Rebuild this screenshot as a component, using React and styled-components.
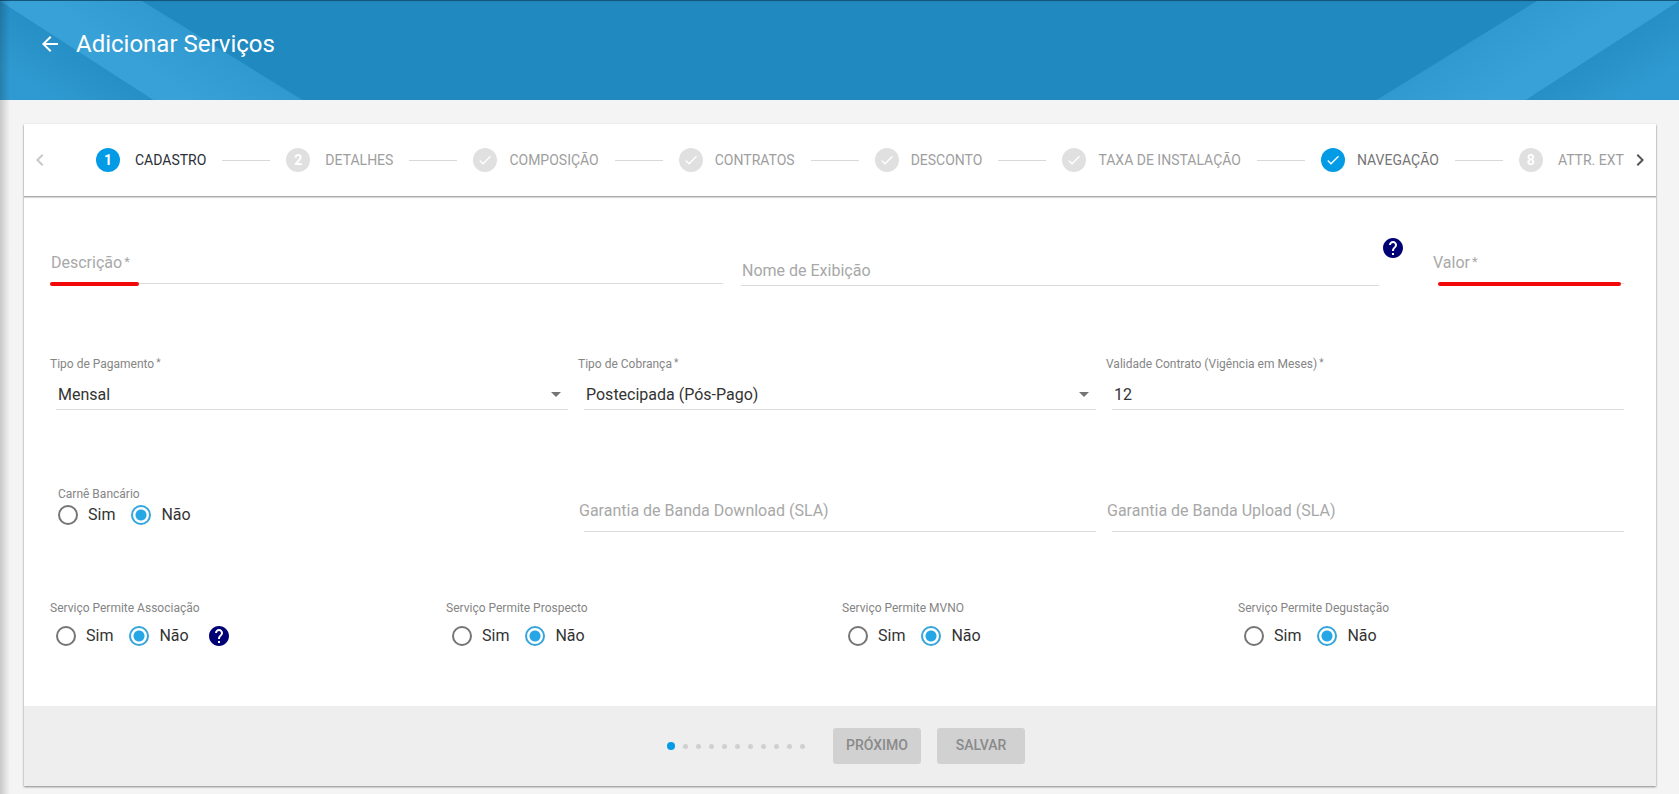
import React, { useState } from 'react';
import styled, { createGlobalStyle } from 'styled-components';
import { MdArrowBack, MdCheck, MdChevronLeft, MdChevronRight, MdHelp } from 'react-icons/md';

const GlobalStyle = createGlobalStyle`
  * {
    box-sizing: border-box;
  }

  body {
    margin: 0;
    background-color: #f4f4f4;
    color: #333;
    font-family: Roboto, "Liberation Sans", sans-serif;
    font-size: 16px;
  }

  button, input, select {
    font: inherit;
    color: inherit;
  }
`;

const Page = styled.div`
  position: relative;
  min-height: 100vh;
  padding-bottom: 7px;

  /* shadow of the closed side menu */
  &::after {
    content: '';
    position: absolute;
    top: 0;
    bottom: 0;
    left: 0;
    width: 10px;
    background: linear-gradient(to right, rgba(0, 0, 0, 0.18), rgba(0, 0, 0, 0));
    pointer-events: none;
  }
`;

const Header = styled.header`
  position: relative;
  height: 100px;
  padding: 28px 38px;
  display: flex;
  align-items: flex-start;
  gap: 14px;
  background-color: #2089bf;
  box-shadow: inset 0 2px 1px -1px rgba(0, 0, 0, 0.4);
  overflow: hidden;
`;

const Stripes = styled.svg`
  position: absolute;
  top: 1px;
  left: ${props => props.$right ? 'auto' : '0'};
  right: ${props => props.$right ? '0' : 'auto'};
  width: 306px;
  height: 100px;
  transform: ${props => props.$right ? 'scaleX(-1)' : 'none'};
`;

const IconButton = styled.button`
  position: relative;
  display: flex;
  padding: 4px 0;
  border: 0;
  background: none;
  color: ${props => props.$color};
  cursor: pointer;
`;

const Title = styled.h1`
  position: relative;
  margin: 0;
  color: white;
  font-size: 24px;
  font-weight: 400;
  line-height: 32px;
`;

const Card = styled.form`
  margin: 24px 23px 0 24px;
  background-color: white;
  box-shadow: 0 1px 2px rgba(0, 0, 0, 0.45);
`;

const StepBar = styled.nav`
  height: 73px;
  padding: 0 4px;
  display: flex;
  align-items: center;
  border-bottom: 1px solid #a9abab;
  box-shadow: 0 1px 1px rgba(0, 0, 0, 0.15);
`;

const StepList = styled.ol`
  flex: 1;
  min-width: 0;
  height: 100%;
  margin: 0 4px 0 0;
  padding: 0 0 0 44px;
  display: flex;
  align-items: center;
  list-style: none;
  overflow: hidden;
`;

const StepItem = styled.li`
  flex: none;
  display: flex;
  align-items: center;

  & + &::before {
    content: '';
    width: 48px;
    height: 1px;
    margin: 1px 16px 0;
    background-color: #d8d8d8;
  }
`;

const StepButton = styled.button`
  padding: 0;
  border: 0;
  background: none;
  display: flex;
  align-items: center;
  gap: ${props => props.$numbered ? '15px' : '12px'};
  color: ${props => props.$color};
  font-size: 14px;
  font-weight: 400;
  line-height: 20px;
  white-space: nowrap;
  cursor: pointer;
`;

const StepMark = styled.span`
  width: 24px;
  height: 24px;
  border-radius: 50%;
  display: flex;
  align-items: center;
  justify-content: center;
  background-color: ${props => props.$on ? '#039be5' : '#e0e0e0'};
  color: white;
  font-weight: 700;
`;

const Body = styled.div`
  padding: 0 32px 0 26px;
`;

const Row = styled.div`
  display: grid;
  grid-template-columns: ${props => props.$columns};
  column-gap: ${props => props.$gap || '10px'};
  align-items: start;
  height: ${props => props.$height};
`;

/* label and input share one cell, the label floats over the empty input */
const EmptyField = styled.div`
  position: relative;
  display: grid;
  margin-top: ${props => props.$top};

  & > * {
    grid-area: 1 / 1;
  }

  &::after {
    content: '';
    display: ${props => props.$marked ? 'block' : 'none'};
    position: absolute;
    bottom: -2px;
    left: ${props => props.$markFrom};
    width: ${props => props.$markWidth};
    height: 4px;
    border-radius: 2px;
    background-color: #f20808;
  }
`;

const FloatingLabel = styled.label`
  padding-top: ${props => props.$low ? '6px' : '0'};
  padding-left: 1px;
  color: #a8a8a8;
  line-height: 20px;
  pointer-events: none;
`;

const SmallLabel = styled.label`
  color: #858585;
  font-size: 12px;
  line-height: 16px;
`;

const Required = styled.span`
  padding-left: 2px;
  font-size: ${props => props.$small ? '10px' : '13px'};
  line-height: ${props => props.$small ? '14px' : '18px'};
  vertical-align: top;
`;

const Input = styled.input`
  width: ${props => props.$flush ? '100%' : 'calc(100% - 6px)'};
  height: 31px;
  margin-left: ${props => props.$flush ? '0' : '6px'};
  padding: 2px 2px 1px;
  border: 0;
  border-bottom: 1px solid #dcdcdc;
  border-radius: 0;
  background: none;
  outline: none;

  &:focus {
    border-bottom-color: #039be5;
  }
`;

const Field = styled.div`
  display: flex;
  flex-direction: column;
  gap: 7px;
`;

const SelectBox = styled.div`
  display: grid;
  align-items: center;
  margin-left: 6px;
  border-bottom: 1px solid #dcdcdc;

  & > * {
    grid-area: 1 / 1;
  }

  &::after {
    content: '';
    grid-area: 1 / 1;
    justify-self: end;
    margin-right: 7px;
    border: 5px solid transparent;
    border-top-color: #757575;
    border-bottom: 0;
    pointer-events: none;
  }
`;

const Select = styled.select`
  width: 100%;
  height: 30px;
  padding: 1px 2px 0;
  border: 0;
  background: none;
  appearance: none;
  outline: none;
`;

const NameGroup = styled.div`
  display: flex;
  align-items: flex-start;
  gap: 2px;
  padding-right: 9px;

  ${EmptyField} {
    flex: 1;
  }
`;

const HelpButton = styled(IconButton)`
  padding: 0;
  margin-top: ${props => props.$raised ? '39px' : '0'};
  margin-left: ${props => props.$spaced ? '18px' : '0'};
`;

const RadioGroup = styled.fieldset`
  margin: 0;
  padding: 0 0 0 ${props => props.$inset ? '8px' : '0'};
  border: 0;
  min-width: 0;
`;

const Legend = styled.legend`
  padding: 0;
  color: #858585;
  font-size: 12px;
  line-height: 16px;
`;

const RadioRow = styled.div`
  height: 24px;
  margin-top: ${props => props.$inset ? '1px' : '8px'};
  margin-left: ${props => props.$inset ? '0' : '6px'};
  display: flex;
  align-items: center;
`;

const RadioLabel = styled.label`
  display: flex;
  align-items: center;
  gap: 10px;
  margin-right: 16px;
  color: #333;
  line-height: 24px;
  cursor: pointer;

  &:last-of-type {
    margin-right: 0;
  }
`;

const Radio = styled.input`
  appearance: none;
  width: 20px;
  height: 20px;
  margin: 0;
  border: 2px solid #757575;
  border-radius: 50%;

  &:checked {
    border-color: #35a5dc;
    background: radial-gradient(circle, #27a6e6 5px, transparent 6px);
  }
`;

const Footer = styled.footer`
  height: 80px;
  padding-left: 12px;
  display: flex;
  align-items: center;
  justify-content: center;
  gap: 16px;
  background-color: #eee;
`;

const Dots = styled.div`
  display: flex;
  align-items: center;
  gap: 8px;
  margin-right: 12px;
`;

const Dot = styled.span`
  width: ${props => props.$on ? '8px' : '5px'};
  height: ${props => props.$on ? '8px' : '5px'};
  border-radius: 50%;
  background-color: ${props => props.$on ? '#039be5' : '#d0d0d0'};
`;

const Button = styled.button`
  min-width: 88px;
  height: 36px;
  padding: 0 12px 2px;
  border: 0;
  border-radius: 3px;
  background-color: #d1d1d1;
  color: #8a8a8a;
  font-size: 14px;
  font-weight: 500;
`;

const steps = [
  { label: 'CADASTRO', mark: '1', on: true, color: '#2b2f38' },
  { label: 'DETALHES', mark: '2', color: '#9e9e9e' },
  { label: 'COMPOSIÇÃO', color: '#9e9e9e' },
  { label: 'CONTRATOS', color: '#9e9e9e' },
  { label: 'DESCONTO', color: '#9e9e9e' },
  { label: 'TAXA DE INSTALAÇÃO', color: '#9e9e9e' },
  { label: 'NAVEGAÇÃO', on: true, color: '#757575' },
  { label: 'ATTR. EXTRAS', mark: '8', color: '#9e9e9e' },
];

const HeaderStripes = ({ id, right }) => (
  <Stripes $right={right} viewBox="0 0 306 100" aria-hidden="true">
    <defs>
      <linearGradient id={`${id}-band`} gradientUnits="userSpaceOnUse" x1="225" y1="50" x2="192" y2="100">
        <stop offset="0" stopColor="#3099cf" />
        <stop offset="1" stopColor="#38a1d8" />
      </linearGradient>
      <linearGradient id={`${id}-corner`} gradientUnits="userSpaceOnUse" x1="78" y1="50" x2="48" y2="97">
        <stop offset="0" stopColor="#268fc5" />
        <stop offset="1" stopColor="#2f9ad1" />
      </linearGradient>
    </defs>
    <polygon points="0,0 142,0 304,100 0,100" fill={`url(#${id}-band)`} />
    <polygon points="0,0 155,100 0,100" fill={`url(#${id}-corner)`} />
  </Stripes>
);

const TextField = ({ id, label, required, low, flush, ...rest }) => (
  <EmptyField {...rest}>
    <Input id={id} type="text" required={required} $flush={flush} />
    <FloatingLabel htmlFor={id} $low={low}>
      {label}{required && <Required>*</Required>}
    </FloatingLabel>
  </EmptyField>
);

const SelectField = ({ id, label, options }) => (
  <Field>
    <SmallLabel htmlFor={id}>{label}<Required $small>*</Required></SmallLabel>
    <SelectBox>
      <Select id={id}>
        {options.map(option => <option key={option}>{option}</option>)}
      </Select>
    </SelectBox>
  </Field>
);

const YesNo = ({ name, label, inset, children }) => {
  const [value, setValue] = useState('Não');

  return (
    <RadioGroup $inset={inset}>
      <Legend>{label}</Legend>
      <RadioRow $inset={inset}>
        {['Sim', 'Não'].map(option => (
          <RadioLabel key={option}>
            <Radio
              type="radio"
              name={name}
              checked={value === option}
              onChange={() => setValue(option)} />
            {option}
          </RadioLabel>
        ))}
        {children}
      </RadioRow>
    </RadioGroup>
  );
};

const Help = ({ spaced, raised }) => (
  <HelpButton type="button" aria-label="Ajuda" $color="#000075" $spaced={spaced} $raised={raised}>
    <MdHelp size={24} />
  </HelpButton>
);

const App = () => (
  <Page>
    <GlobalStyle />
    <Header>
      <HeaderStripes id="left" />
      <HeaderStripes id="right" right />
      <IconButton type="button" aria-label="Voltar" $color="white">
        <MdArrowBack size={24} />
      </IconButton>
      <Title>Adicionar Serviços</Title>
    </Header>

    <Card onSubmit={event => event.preventDefault()}>
      <StepBar>
        <IconButton type="button" aria-label="Anterior" $color="#c8c8c8">
          <MdChevronLeft size={24} />
        </IconButton>
        <StepList>
          {steps.map(step => (
            <StepItem key={step.label}>
              <StepButton type="button" $color={step.color} $numbered={!!step.mark}>
                <StepMark $on={step.on}>{step.mark || <MdCheck size={16} />}</StepMark>
                {step.label}
              </StepButton>
            </StepItem>
          ))}
        </StepList>
        <IconButton type="button" aria-label="Seguinte" $color="#555">
          <MdChevronRight size={24} />
        </IconButton>
      </StepBar>

      <Body>
        <Row $columns="673fr 673fr 192fr" $gap="18px" $height="159px">
          <TextField id="descricao" label="Descrição" required flush $top="56px" $marked $markFrom="0" $markWidth="89px" />
          <NameGroup>
            <TextField id="nome" label="Nome de Exibição" flush low $top="58px" />
            <Help raised />
          </NameGroup>
          <TextField id="valor" label="Valor" required $top="56px" $marked $markFrom="6px" $markWidth="calc(100% - 9px)" />
        </Row>

        <Row $columns="repeat(3, 1fr)" $height="130px">
          <SelectField id="pagamento" label="Tipo de Pagamento" options={['Mensal', 'Anual']} />
          <SelectField id="cobranca" label="Tipo de Cobrança" options={['Postecipada (Pós-Pago)', 'Antecipada (Pré-Pago)']} />
          <Field>
            <SmallLabel htmlFor="validade">
              Validade Contrato (Vigência em Meses)<Required $small>*</Required>
            </SmallLabel>
            <Input id="validade" type="text" defaultValue="12" />
          </Field>
        </Row>

        <Row $columns="repeat(3, 1fr)" $height="114px">
          <YesNo name="carne" label="Carnê Bancário" inset />
          <TextField id="download" label="Garantia de Banda Download (SLA)" $top="15px" />
          <TextField id="upload" label="Garantia de Banda Upload (SLA)" $top="15px" />
        </Row>

        <Row $columns="repeat(4, 1fr)" $height="106px">
          <YesNo name="associacao" label="Serviço Permite Associação">
            <Help spaced />
          </YesNo>
          <YesNo name="prospecto" label="Serviço Permite Prospecto" />
          <YesNo name="mvno" label="Serviço Permite MVNO" />
          <YesNo name="degustacao" label="Serviço Permite Degustação" />
        </Row>
      </Body>

      <Footer>
        <Dots>
          {Array.from({ length: 11 }, (_, i) => <Dot key={i} $on={i === 0} />)}
        </Dots>
        <Button type="button">PRÓXIMO</Button>
        <Button type="submit">SALVAR</Button>
      </Footer>
    </Card>
  </Page>
);

export default App;
